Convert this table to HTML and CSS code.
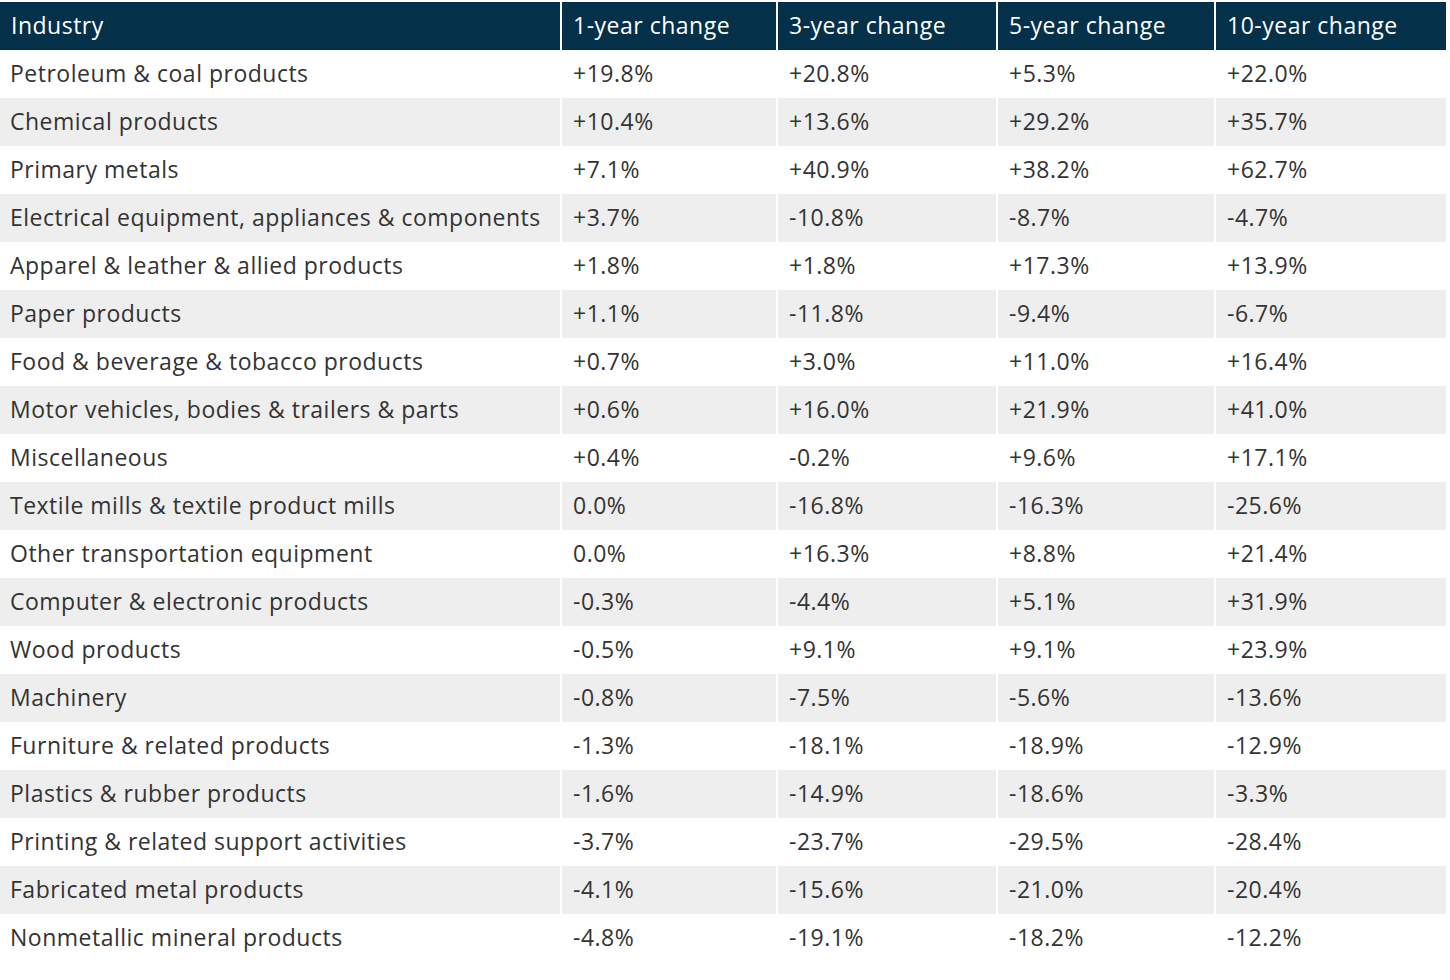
FILE: index.html
```html
<!DOCTYPE html>
<html>
<head>
<meta charset="utf-8">
<link rel="stylesheet" href="styles.css">
</head>
<body>
<table class="data">
<colgroup><col class="c1"><col class="c2"><col class="c3"><col class="c4"><col class="c5"></colgroup>
<thead>
<tr><th>Industry</th><th>1-year change</th><th>3-year change</th><th>5-year change</th><th>10-year change</th></tr>
</thead>
<tbody>
<tr><td>Petroleum &amp; coal products</td><td>+19.8%</td><td>+20.8%</td><td>+5.3%</td><td>+22.0%</td></tr>
<tr><td>Chemical products</td><td>+10.4%</td><td>+13.6%</td><td>+29.2%</td><td>+35.7%</td></tr>
<tr><td>Primary metals</td><td>+7.1%</td><td>+40.9%</td><td>+38.2%</td><td>+62.7%</td></tr>
<tr><td>Electrical equipment, appliances &amp; components</td><td>+3.7%</td><td>-10.8%</td><td>-8.7%</td><td>-4.7%</td></tr>
<tr><td>Apparel &amp; leather &amp; allied products</td><td>+1.8%</td><td>+1.8%</td><td>+17.3%</td><td>+13.9%</td></tr>
<tr><td>Paper products</td><td>+1.1%</td><td>-11.8%</td><td>-9.4%</td><td>-6.7%</td></tr>
<tr><td>Food &amp; beverage &amp; tobacco products</td><td>+0.7%</td><td>+3.0%</td><td>+11.0%</td><td>+16.4%</td></tr>
<tr><td>Motor vehicles, bodies &amp; trailers &amp; parts</td><td>+0.6%</td><td>+16.0%</td><td>+21.9%</td><td>+41.0%</td></tr>
<tr><td>Miscellaneous</td><td>+0.4%</td><td>-0.2%</td><td>+9.6%</td><td>+17.1%</td></tr>
<tr><td>Textile mills &amp; textile product mills</td><td>0.0%</td><td>-16.8%</td><td>-16.3%</td><td>-25.6%</td></tr>
<tr><td>Other transportation equipment</td><td>0.0%</td><td>+16.3%</td><td>+8.8%</td><td>+21.4%</td></tr>
<tr><td>Computer &amp; electronic products</td><td>-0.3%</td><td>-4.4%</td><td>+5.1%</td><td>+31.9%</td></tr>
<tr><td>Wood products</td><td>-0.5%</td><td>+9.1%</td><td>+9.1%</td><td>+23.9%</td></tr>
<tr><td>Machinery</td><td>-0.8%</td><td>-7.5%</td><td>-5.6%</td><td>-13.6%</td></tr>
<tr><td>Furniture &amp; related products</td><td>-1.3%</td><td>-18.1%</td><td>-18.9%</td><td>-12.9%</td></tr>
<tr><td>Plastics &amp; rubber products</td><td>-1.6%</td><td>-14.9%</td><td>-18.6%</td><td>-3.3%</td></tr>
<tr><td>Printing &amp; related support activities</td><td>-3.7%</td><td>-23.7%</td><td>-29.5%</td><td>-28.4%</td></tr>
<tr><td>Fabricated metal products</td><td>-4.1%</td><td>-15.6%</td><td>-21.0%</td><td>-20.4%</td></tr>
<tr><td>Nonmetallic mineral products</td><td>-4.8%</td><td>-19.1%</td><td>-18.2%</td><td>-12.2%</td></tr>
</tbody>
</table>
</body>
</html>
```
FILE: styles.css
```css
html, body {
  margin: 0;
  padding: 0;
  background: #ffffff;
}
body {
  padding-top: 2px;
  font-family: "Open Sans", "Lato", sans-serif;
  font-size: 23px;
  color: #333333;
}
.data {
  border-collapse: separate;
  border-spacing: 0;
  table-layout: fixed;
  width: 1446px;
}
.c1 { width: 560px; }
.c2 { width: 216px; }
.c3 { width: 220px; }
.c4 { width: 218px; }
.c5 { width: 232px; }
.data th,
.data td {
  height: 48px;
  padding: 0 0 2px 11px;
  text-align: left;
  vertical-align: middle;
  white-space: nowrap;
  border-left: 2px solid #ffffff;
  box-sizing: border-box;
  line-height: 28px;
  letter-spacing: 0.5px;
}
.data th:first-child,
.data td:first-child {
  border-left: none;
  padding-left: 11px;
}
.data td:first-child {
  padding-left: 10px;
}
.data th {
  background: #04304a;
  color: #ffffff;
  font-weight: normal;
}
.data tbody tr:nth-child(even) td {
  background: #eeeeee;
}
```
